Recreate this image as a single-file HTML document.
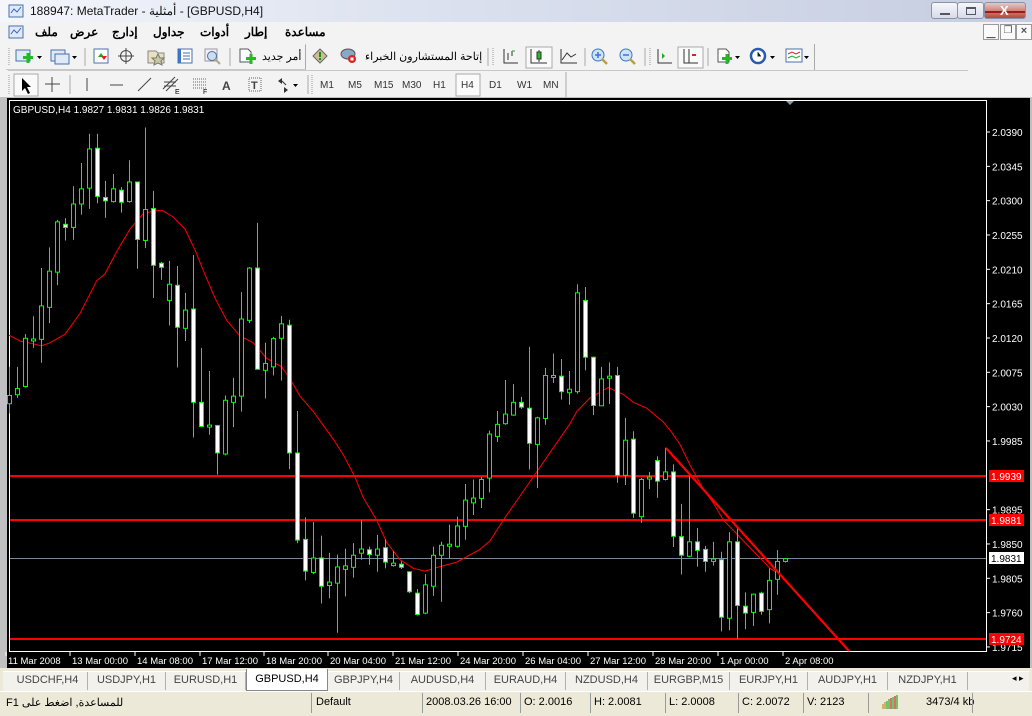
<!DOCTYPE html>
<html><head><meta charset="utf-8">
<style>
*{margin:0;padding:0;box-sizing:border-box}
body{width:1032px;height:716px;overflow:hidden;background:#ece9d8;font-family:"Liberation Sans","Noto Sans CJK SC",sans-serif;font-size:11px;color:#000;position:relative}
.abs{position:absolute}
#title{left:0;top:0;width:1032px;height:22px;background:linear-gradient(90deg,#f4f6fb 0%,#dce2ef 40%,#c6cde0 100%)}
#title .t{left:30px;top:4px;font-size:12px;color:#111;white-space:nowrap}
#menu{left:0;top:22px;width:1032px;height:20px;background:#f3f3f3}
.mi{top:3px;font-size:12px;font-weight:bold;color:#000;white-space:nowrap}
.tb{background:#f3f3f3}
.sep{width:1px;background:#a0a0a0;border-right:1px solid #fff}
.grip{width:3px;border-left:1px dotted #999}
.tf{font-size:10px;color:#333;top:80px}
.btn{border:1px solid #9a9a9a;background:#fafafa}
.tab{top:672px;height:18px;font-size:11px;color:#444;text-align:center;line-height:17px;border-right:1px solid #b0b0b0}
.st{top:696px;font-size:11px;color:#000;white-space:nowrap}
.ss{top:693px;width:1px;height:20px;background:#999}
</style></head><body>
<div id="title" class="abs">
  <svg class="abs" style="left:8px;top:3px" width="16" height="16"><rect x="1" y="2" width="14" height="12" fill="#dfe9f7" stroke="#4a6fa8"/><path d="M3 10 L6 6 L9 9 L13 4" stroke="#3366cc" fill="none"/></svg>
  <div class="abs t">188947: MetaTrader - أمثلية - [GBPUSD,H4]</div>
  <div class="abs" style="left:931px;top:2px;width:27px;height:17px;border:1px solid #8892a8;border-radius:3px;background:linear-gradient(#f6f7fb,#d6dbe8)"><div class="abs" style="left:8px;top:10px;width:10px;height:2px;background:#556"></div></div>
  <div class="abs" style="left:957px;top:2px;width:27px;height:17px;border:1px solid #8892a8;border-radius:3px;background:linear-gradient(#f6f7fb,#d6dbe8)"><div class="abs" style="left:8px;top:4px;width:10px;height:8px;border:1px solid #556;border-top-width:2px"></div></div>
  <div class="abs" style="left:984px;top:2px;width:42px;height:17px;border:1px solid #8892a8;border-radius:3px;background:linear-gradient(#e8c8c0,#b64838)"><div class="abs" style="left:0;top:8px;width:40px;height:2px;background:#a01818"></div><div class="abs" style="left:15px;top:0;color:#fff;font-weight:bold;font-size:13px">X</div></div>
</div>
<div id="menu" class="abs">
  <svg class="abs" style="left:8px;top:2px" width="16" height="16"><rect x="1" y="2" width="14" height="12" fill="#dfe9f7" stroke="#4a6fa8"/><path d="M3 10 L6 6 L9 9 L13 4" stroke="#3366cc" fill="none"/></svg>
  <div class="abs mi" style="left:35px">ملف</div>
  <div class="abs mi" style="left:70px">عرض</div>
  <div class="abs mi" style="left:112px">إدارج</div>
  <div class="abs mi" style="left:153px">جداول</div>
  <div class="abs mi" style="left:200px">أدوات</div>
  <div class="abs mi" style="left:245px">إطار</div>
  <div class="abs mi" style="left:285px">مساعدة</div>
  <div class="abs btn" style="left:983px;top:2px;width:16px;height:16px;color:#555;font-size:9px;text-align:center;line-height:18px">▁</div>
  <div class="abs btn" style="left:1000px;top:2px;width:16px;height:16px;color:#555;font-size:10px;text-align:center">❐</div>
  <div class="abs btn" style="left:1016px;top:2px;width:16px;height:16px;color:#555;font-size:11px;font-weight:bold;text-align:center">×</div>
</div>
<div class="abs tb" style="left:0;top:42px;width:1032px;height:56px"></div>
<div class="abs" style="left:6px;top:44px;width:300px;height:26px;border:1px solid #c8c8c8;border-top:none;border-left:none"></div>
<div class="abs" style="left:8px;top:70px;width:960px;height:1px;background:#c8c8c8"></div>
<div class="abs" style="left:305px;top:45px;width:1px;height:24px;background:#aaa"></div>
<!-- toolbar1 icons -->
<svg class="abs" style="left:0;top:44px" width="820" height="26">
 <g stroke="#999"><line x1="9" y1="4" x2="9" y2="22" stroke-dasharray="1 1"/></g>
 <rect x="16" y="6" width="14" height="11" fill="#dfe9f7" stroke="#4a6fa8"/><rect x="23" y="12" width="10" height="3" fill="#22bb22"/><rect x="26.5" y="9" width="3" height="10" fill="#22bb22"/><path d="M37 12 h5 l-2.5 3z" fill="#000"/>
 <rect x="51" y="6" width="14" height="11" fill="#dfe9f7" stroke="#4a6fa8"/><rect x="55" y="10" width="14" height="10" fill="#dfe9f7" stroke="#4a6fa8"/><path d="M72 12 h5 l-2.5 3z" fill="#000"/>
 <line x1="85" y1="4" x2="85" y2="22" stroke="#aaa"/>
 <rect x="94" y="5" width="14" height="14" fill="#fff" stroke="#4a6fa8"/><path d="M98 13 l3-4 3 4z" fill="#22aa22"/><path d="M101 12 l3 4 3-4z" fill="#dd2222"/>
 <circle cx="126" cy="12" r="5.5" fill="none" stroke="#444"/><path d="M126 4v16M118 12h16" stroke="#444"/>
 <path d="M148 7h8l2 2h6v10h-16z" fill="#e8e0c0" stroke="#888"/><path d="M158 10l2 4 4 0-3 3 1 4-4-2-4 2 1-4-3-3 4 0z" fill="#c8c8a0" stroke="#777"/>
 <rect x="178" y="5" width="14" height="14" fill="#fff" stroke="#4a6fa8"/><rect x="178" y="5" width="3" height="14" fill="#3a76c8"/><path d="M183 9h7M183 12h7M183 15h7" stroke="#4a6fa8"/>
 <rect x="205" y="5" width="12" height="12" fill="#eef" stroke="#999"/><circle cx="212" cy="12" r="4.5" fill="#cde" stroke="#4a6fa8"/><line x1="215" y1="15" x2="220" y2="20" stroke="#aa8" stroke-width="2"/>
 <line x1="230" y1="4" x2="230" y2="22" stroke="#aaa"/>
 <path d="M240 5h8l3 3v10h-11z" fill="#fff" stroke="#555"/><rect x="246" y="13" width="10" height="3" fill="#22bb22"/><rect x="249.5" y="10" width="3" height="10" fill="#22bb22"/>
 <text x="262" y="16" font-size="11" font-family="Liberation Sans,Noto Sans CJK SC,sans-serif">أمر جديد</text>
 <path d="M320 5l7 7-7 7-7-7z" fill="#c8c090" stroke="#666"/><rect x="319" y="8" width="2" height="5" fill="#228822"/><rect x="319" y="14" width="2" height="2" fill="#228822"/>
 <ellipse cx="348" cy="10" rx="7" ry="5" fill="#89a8c8" stroke="#555"/><circle cx="352" cy="15" r="4" fill="#dd2222"/><rect x="350.5" y="13.5" width="3" height="3" fill="#fff"/>
 <text x="365" y="16" font-size="11" font-family="Liberation Sans,Noto Sans CJK SC,sans-serif">إتاحة المستشارون الخبراء</text>
 <line x1="488" y1="4" x2="488" y2="22" stroke="#aaa"/><line x1="493" y1="4" x2="493" y2="22" stroke="#999" stroke-dasharray="1 1"/>
 <path d="M504 5v14h14M508 9v7M512 7v5" stroke="#333" fill="none"/><path d="M512 7h3" stroke="#22aa22"/>
 <rect x="526" y="3" width="26" height="21" fill="#fafafa" stroke="#aaa"/><path d="M531 5v14h16M539 6v12" stroke="#333" fill="none"/><rect x="537" y="8" width="4" height="7" fill="#22bb22" stroke="#333"/>
 <path d="M561 5v14h16M562 16l5-7 4 4 5-3" stroke="#333" fill="none"/>
 <line x1="585" y1="4" x2="585" y2="22" stroke="#aaa"/>
 <circle cx="598" cy="11" r="6" fill="#cfe3f8" stroke="#3a76c8"/><path d="M595 11h6M598 8v6" stroke="#3a76c8" stroke-width="1.5"/><line x1="602" y1="15" x2="607" y2="20" stroke="#b9a040" stroke-width="2.5"/>
 <circle cx="626" cy="11" r="6" fill="#cfe3f8" stroke="#3a76c8"/><path d="M623 11h6" stroke="#3a76c8" stroke-width="1.5"/><line x1="630" y1="15" x2="635" y2="20" stroke="#b9a040" stroke-width="2.5"/>
 <line x1="645" y1="4" x2="645" y2="22" stroke="#aaa"/><line x1="650" y1="4" x2="650" y2="22" stroke="#999" stroke-dasharray="1 1"/>
 <path d="M658 5v14h14" stroke="#333" fill="none"/><path d="M662 9v6l3-3z" fill="#22aa22"/>
 <rect x="678" y="3" width="25" height="21" fill="#fafafa" stroke="#aaa"/><path d="M684 5v14h14M689 5v14" stroke="#333" fill="none"/><path d="M696 11l-4 0" stroke="#dd2222" stroke-width="2"/>
 <line x1="708" y1="4" x2="708" y2="22" stroke="#aaa"/>
 <path d="M718 5h8l3 3v10h-11z" fill="#fff" stroke="#555"/><rect x="722" y="13" width="10" height="3" fill="#22bb22"/><rect x="725.5" y="10" width="3" height="10" fill="#22bb22"/><path d="M735 12h5l-2.5 3z" fill="#000"/>
 <circle cx="758" cy="12" r="7" fill="#fff" stroke="#2a5ab0" stroke-width="2.5"/><path d="M758 8v4h3" stroke="#333"/><path d="M770 12h5l-2.5 3z" fill="#000"/>
 <rect x="786" y="5" width="16" height="13" fill="#fff" stroke="#4a6fa8"/><path d="M788 10l4-2 4 2 4-2" stroke="#dd2222" fill="none"/><path d="M788 14l4-2 4 2 4-2" stroke="#22aa22" fill="none"/><path d="M804 12h5l-2.5 3z" fill="#000"/>
 <rect x="814" y="0" width="1" height="26" fill="#aaa"/>
</svg>
<!-- toolbar2 -->
<svg class="abs" style="left:0;top:72px" width="580" height="26">
 <line x1="9" y1="3" x2="9" y2="22" stroke="#999" stroke-dasharray="1 1"/>
 <rect x="14" y="2" width="24" height="22" fill="#fafafa" stroke="#aaa"/>
 <path d="M22 6l0 13 3-3 3 6 2-1-3-6 4 0z" fill="#000"/>
 <path d="M52 5v15M45 12h15" stroke="#444"/>
 <line x1="70" y1="3" x2="70" y2="22" stroke="#aaa"/>
 <line x1="87" y1="6" x2="87" y2="19" stroke="#444"/>
 <line x1="110" y1="13" x2="123" y2="13" stroke="#444"/>
 <line x1="138" y1="19" x2="151" y2="6" stroke="#444"/>
 <path d="M163 17l12-12M166 19l12-12M164 10h12M164 14h12" stroke="#444"/><text x="175" y="22" font-size="7">E</text>
 <path d="M193 7h14M193 10h14M193 13h14M193 16h14" stroke="#666" stroke-dasharray="1 1"/><text x="203" y="22" font-size="7">F</text>
 <text x="222" y="18" font-size="12" font-weight="bold" fill="#444" font-family="Liberation Sans,sans-serif">A</text>
 <rect x="249" y="6" width="12" height="13" fill="none" stroke="#666" stroke-dasharray="1 1"/><text x="251" y="17" font-size="11" font-weight="bold" fill="#444" font-family="Liberation Sans,sans-serif">T</text>
 <path d="M278 9l4-3 0 6zM284 15l4 3-4 3z" fill="#333"/><path d="M282 9l4 4" stroke="#333"/><path d="M293 12h5l-2.5 3z" fill="#000"/>
 <line x1="308" y1="3" x2="308" y2="22" stroke="#aaa"/><line x1="312" y1="3" x2="312" y2="22" stroke="#999" stroke-dasharray="1 1"/>
 <rect x="456" y="2" width="24" height="22" fill="#fafafa" stroke="#aaa"/>
 <line x1="566" y1="0" x2="566" y2="26" stroke="#aaa"/>
</svg>
<div class="abs tf" style="left:320px">M1</div>
<div class="abs tf" style="left:348px">M5</div>
<div class="abs tf" style="left:374px">M15</div>
<div class="abs tf" style="left:402px">M30</div>
<div class="abs tf" style="left:433px">H1</div>
<div class="abs tf" style="left:461px">H4</div>
<div class="abs tf" style="left:489px">D1</div>
<div class="abs tf" style="left:517px">W1</div>
<div class="abs tf" style="left:543px">MN</div>

<!-- chart -->
<div class="abs" style="left:0;top:97px;width:1032px;height:571px;background:#c0c0c0"></div>
<div class="abs" style="left:7px;top:98px;width:1023px;height:570px;background:#000"></div>
<svg id="ch" class="abs" style="left:0;top:0" width="1032" height="716"></svg>

<!-- tabs -->
<div class="abs" style="left:0;top:668px;width:1032px;height:23px;background:#ece9d8"></div>
<div class="abs" style="left:3px;top:671px;width:1026px;height:20px;background:#f2f1ec;border-top:1px solid #fff"></div>
<div class="abs tab" style="left:8px;width:80px">USDCHF,H4</div>
<div class="abs tab" style="left:88px;width:78px">USDJPY,H1</div>
<div class="abs tab" style="left:166px;width:80px">EURUSD,H1</div>
<div class="abs" style="left:246px;top:669px;width:82px;height:22px;background:#fff;border:1px solid #888;border-top:none;color:#000;text-align:center;line-height:21px;font-size:11px">GBPUSD,H4</div>
<div class="abs tab" style="left:328px;width:72px">GBPJPY,H4</div>
<div class="abs tab" style="left:400px;width:86px">AUDUSD,H4</div>
<div class="abs tab" style="left:486px;width:80px">EURAUD,H4</div>
<div class="abs tab" style="left:566px;width:82px">NZDUSD,H4</div>
<div class="abs tab" style="left:648px;width:82px">EURGBP,M15</div>
<div class="abs tab" style="left:730px;width:78px">EURJPY,H1</div>
<div class="abs tab" style="left:808px;width:80px">AUDJPY,H1</div>
<div class="abs tab" style="left:888px;width:80px">NZDJPY,H1</div>
<div class="abs" style="left:1012px;top:673px;font-size:9px;color:#000">◂ ▸</div>
<!-- status -->
<div class="abs" style="left:0;top:691px;width:1032px;height:25px;background:#ece9d8;border-top:1px solid #fff"></div>
<div class="abs st" style="left:6px">F1 للمساعدة, اضغط على</div>
<div class="abs ss" style="left:311px"></div>
<div class="abs st" style="left:316px">Default</div>
<div class="abs ss" style="left:422px"></div>
<div class="abs st" style="left:426px">2008.03.26 16:00</div>
<div class="abs ss" style="left:520px"></div>
<div class="abs st" style="left:524px">O: 2.0016</div>
<div class="abs ss" style="left:590px"></div>
<div class="abs st" style="left:594px">H: 2.0081</div>
<div class="abs ss" style="left:665px"></div>
<div class="abs st" style="left:669px">L: 2.0008</div>
<div class="abs ss" style="left:738px"></div>
<div class="abs st" style="left:742px">C: 2.0072</div>
<div class="abs ss" style="left:803px"></div>
<div class="abs st" style="left:807px">V: 2123</div>
<div class="abs ss" style="left:868px"></div>
<svg class="abs" style="left:882px;top:695px" width="16" height="14"><g stroke-width="1.2"><line x1="1" y1="14" x2="1" y2="9" stroke="#c82"/><line x1="3" y1="14" x2="3" y2="7" stroke="#c82"/><line x1="5" y1="14" x2="5" y2="6" stroke="#2a2"/><line x1="7" y1="14" x2="7" y2="4" stroke="#2a2"/><line x1="9" y1="14" x2="9" y2="3" stroke="#c22"/><line x1="11" y1="14" x2="11" y2="2" stroke="#2a2"/><line x1="13" y1="14" x2="13" y2="1" stroke="#c22"/><line x1="15" y1="14" x2="15" y2="0" stroke="#2a2"/></g></svg>
<div class="abs st" style="left:926px">3473/4 kb</div>
<div class="abs ss" style="left:972px"></div>

<script>
var NS="http://www.w3.org/2000/svg",svg=document.getElementById('ch');
function el(t,a){var e=document.createElementNS(NS,t);for(var k in a)e.setAttribute(k,a[k]);svg.appendChild(e);return e}
var S=2.904;function Y(z){return 100+z/S}
// frame
el('rect',{x:9.5,y:100.5,width:977,height:551,fill:'none',stroke:'#fff'});
// horizontal lines
el('line',{x1:10,y1:558.5,x2:986,y2:558.5,stroke:'#778899'});
[476,520,639].forEach(function(y){el('rect',{x:10,y:y-1,width:976,height:2,fill:'#ff0000'})});
// MA
var ma=[[27,683],[60,700],[100,708],[124,714],[150,705],[195,680],[240,620],[290,525],[315,505],[350,440],[390,375],[430,330],[470,320],[490,322],[520,340],[555,375],[585,435],[610,495],[645,575],[680,640],[720,685],[760,705],[800,750],[845,775],[870,810],[900,860],[940,905],[1000,985],[1030,1030],[1065,1095],[1090,1155],[1130,1220],[1160,1285],[1200,1335],[1240,1360],[1275,1368],[1320,1355],[1370,1342],[1440,1305]];
var ma2=[[0,1280],[40,1220],[90,1150],[140,1080],[190,1010],[240,940],[260,905],[300,865],[355,835],[400,855],[430,878],[470,895],[520,935],[545,965],[570,1000],[600,1060],[640,1130],[670,1170],[700,1220],[740,1260],[790,1310],[840,1360],[880,1385]];
var pts=ma.map(function(p){return (p[0]/3).toFixed(1)+','+Y(p[1]).toFixed(1)}).concat(ma2.map(function(p){return (490+p[0]/3).toFixed(1)+','+Y(p[1]).toFixed(1)}));
el('polyline',{points:pts.join(' '),fill:'none',stroke:'#ff0000','stroke-width':1});
// candles [hi,lo,top,bot,up]
var d=[[775,910,858,882,1],[775,865,838,856,1],[680,835,692,832,1],[628,720,694,698,1],[488,763,598,695,1],[428,648,497,602,1],[348,538,354,500,1],[343,408,361,370,0],[250,406,302,370,1],[183,333,258,302,1],[98,316,142,256,1],[98,300,140,280,0],[235,342,283,293,0],[215,298,258,295,1],[253,327,262,297,0],[175,298,238,295,1],[238,490,238,405,0],[80,430,318,408,1],[264,575,315,480,0],[470,522,474,486,0],[467,655,535,582,1],[482,777,538,660,0],[560,700,610,663,1],[450,980,607,878,0],[720,950,878,948,0],[787,972,944,948,1],[945,1088,945,1025,0],[858,1032,872,1028,1],[807,950,860,878,1],[558,905,636,860,1],[485,648,488,640,1],[357,782,488,782,0],[705,867,765,785,1],[688,800,693,775,1],[627,815,650,692,1],[638,1072,654,1025,0],[903,1287,1025,1278,0],[1212,1395,1276,1368,0],[1225,1377,1330,1372,1],[1265,1462,1330,1412,0],[1315,1447,1400,1410,1],[1320,1547,1356,1403,1],[1303,1442,1353,1363,1],[1287,1387,1322,1357,1],[1220,1335,1304,1316,1],[1297,1350,1306,1320,0],[1263,1370,1304,1322,1],[1275,1360,1300,1342,0],[1310,1355,1345,1352,1],[1340,1362,1348,1357,0],[1368,1432,1370,1428,0],[1420,1497,1432,1494,0],[1377,1493,1408,1490,1],[1297,1440,1322,1412,1],[1283,1457,1293,1322,1],[1233,1330,1290,1294,1],[1210,1300,1237,1296,1],[1115,1277,1162,1238,1],[1102,1205,1156,1170,1],[1095,1185,1102,1157,1],
[960,1140,970,1098,1],[903,993,942,977,1],[813,943,912,940,1],[825,917,878,915,1],[862,897,878,892,0],[717,1073,895,997,0],[920,1127,923,1000,1],[778,943,800,925,1],[736,822,800,803,1],[752,870,802,847,0],[787,885,840,850,1],[535,853,560,847,1],[543,785,582,747,0],[745,915,747,887,0],[775,888,810,888,1],[762,883,802,808,1],[775,1112,800,1090,0],[923,1118,988,1090,1],[962,1213,985,1200,0],[1098,1228,1102,1210,1],[1080,1130,1095,1100,1],[1035,1155,1047,1107,0],[1010,1105,1080,1102,1],[1058,1298,1080,1267,0],[1173,1378,1268,1322,0],[1085,1327,1283,1325,1],[1243,1355,1283,1308,0],[1295,1370,1305,1340,0],[1283,1352,1333,1340,1],[1312,1543,1335,1502,0],[1255,1540,1283,1505,1],[1240,1565,1283,1468,0],[1430,1537,1470,1490,0],[1433,1527,1435,1488,1],[1428,1495,1432,1485,0],[1360,1520,1395,1480,1],[1307,1437,1340,1392,1],[1330,1343,1332,1340,1]];
d.forEach(function(c,i){var x=9+8*i;
 el('line',{x1:x+.5,y1:Y(c[0]),x2:x+.5,y2:Y(c[1]),stroke:'#00ff00'});
 var t=Y(c[2]),b=Y(c[3]);if(b-t<2)b=t+2;
 el('rect',{x:x-1.5,y:t,width:4,height:b-t,fill:c[4]?'#000':'#fff',stroke:'#00ff00'});
});
// trendline
el('line',{x1:666,y1:448,x2:849,y2:651,stroke:'#ff0000','stroke-width':2.2});
el('path',{d:'M786 101h8l-4 4z',fill:'#8899aa'});
// header text
var tx=el('text',{x:13,y:113,fill:'#fff','font-size':10,'font-family':'Liberation Sans,sans-serif'});tx.textContent='GBPUSD,H4  1.9827 1.9831 1.9826 1.9831';tx.setAttribute('xml:space','preserve');
// price axis
var pr=['2.0390','2.0345','2.0300','2.0255','2.0210','2.0165','2.0120','2.0075','2.0030','1.9985',null,'1.9895','1.9850','1.9805','1.9760','1.9715'];
pr.forEach(function(p,i){if(!p)return;var y=132+i*34.33;el('line',{x1:987,y1:y,x2:990,y2:y,stroke:'#fff'});var t=el('text',{x:992,y:y+4,fill:'#fff','font-size':10,'font-family':'Liberation Sans,sans-serif'});t.textContent=p;});
[[476,'1.9939'],[520,'1.9881'],[639,'1.9724']].forEach(function(a){el('rect',{x:989,y:a[0]-6,width:35,height:12,fill:'#ff0000'});var t=el('text',{x:991,y:a[0]+4,fill:'#fff','font-size':10,'font-family':'Liberation Sans,sans-serif'});t.textContent=a[1];});
el('rect',{x:989,y:552,width:35,height:12,fill:'#fff'});var t=el('text',{x:991,y:562,fill:'#000','font-size':10,'font-family':'Liberation Sans,sans-serif'});t.textContent='1.9831';
// date axis
[['11 Mar 2008',8],['13 Mar 00:00',72],['14 Mar 08:00',137],['17 Mar 12:00',202],['18 Mar 20:00',266],['20 Mar 04:00',330],['21 Mar 12:00',395],['24 Mar 20:00',460],['26 Mar 04:00',525],['27 Mar 12:00',590],['28 Mar 20:00',655],['1 Apr 00:00',720],['2 Apr 08:00',785]].forEach(function(a){
 el('line',{x1:a[1]-2,y1:652,x2:a[1]-2,y2:656,stroke:'#fff'});
 var t=el('text',{x:a[1],y:664,fill:'#fff','font-size':9.5,'font-family':'Liberation Sans,sans-serif'});t.textContent=a[0];});
</script>
</body></html>
